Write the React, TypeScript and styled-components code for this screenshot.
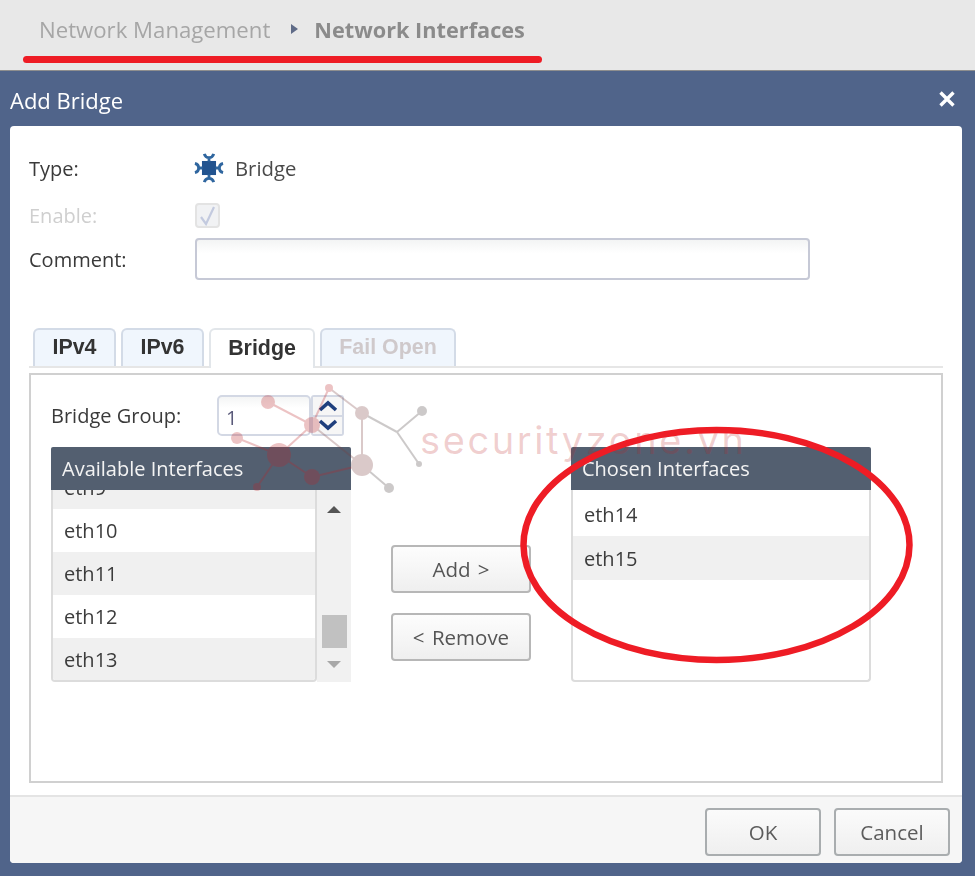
import styled, { createGlobalStyle } from "styled-components";

const GlobalStyle = createGlobalStyle`
  html, body {
    margin: 0;
    padding: 0;
    background: #fff;
  }

  * {
    box-sizing: border-box;
  }
`;

const available = [
  { name: "eth10", shaded: false },
  { name: "eth11", shaded: true },
  { name: "eth12", shaded: false },
  { name: "eth13", shaded: true },
];

const chosen = [
  { name: "eth14", shaded: false },
  { name: "eth15", shaded: true },
];

const ROSE = "rgb(188, 36, 40)";
const MAUVE = "rgb(120, 60, 60)";
const GREY = "rgb(70, 60, 60)";

const nodes = [
  { x: 268, y: 402, r: 7, fill: ROSE },
  { x: 312, y: 425, r: 8, fill: ROSE },
  { x: 237, y: 438, r: 6, fill: ROSE },
  { x: 279, y: 455, r: 12, fill: ROSE },
  { x: 257, y: 487, r: 4, fill: ROSE },
  { x: 312, y: 477, r: 8, fill: ROSE },
  { x: 362, y: 465, r: 11, fill: MAUVE },
  { x: 389, y: 488, r: 5, fill: GREY },
  { x: 329, y: 388, r: 4, fill: ROSE },
  { x: 362, y: 413, r: 7, fill: MAUVE },
  { x: 422, y: 411, r: 5, fill: GREY },
  { x: 419, y: 464, r: 3, fill: GREY },
];

const edges = [
  [268, 402, 312, 425, ROSE],
  [237, 438, 279, 455, ROSE],
  [279, 455, 312, 425, ROSE],
  [279, 455, 257, 487, ROSE],
  [279, 455, 312, 477, ROSE],
  [312, 477, 362, 465, ROSE],
  [362, 465, 389, 488, GREY],
  [362, 465, 362, 413, MAUVE],
  [329, 388, 362, 413, MAUVE],
  [329, 388, 312, 425, ROSE],
  [362, 413, 397, 432, GREY],
  [397, 432, 422, 411, GREY],
  [397, 432, 419, 464, GREY],
  [312, 425, 362, 465, MAUVE],
] as const;

function BridgeIcon(): JSX.Element {
  return (
    <svg width="30" height="30" viewBox="0 0 32 32">
      <rect x="8.5" y="8.5" width="15" height="15" fill="#22538f" />
      <g fill="none" stroke="#2f669f" strokeWidth="3">
        <path d="M16 9V5M11 1Q12 5 16 5T21 1" />
        <path d="M16 23V27M11 31Q12 27 16 27T21 31" />
        <path d="M9 16H5M1 11Q5 12 5 16T1 21" />
        <path d="M23 16H27M31 11Q27 12 27 16T31 21" />
      </g>
    </svg>
  );
}

export default function App(): JSX.Element {
  return (
    <Page>
      <GlobalStyle />
      <Screen>
        <Header>
          <Crumb>Network Management</Crumb>
          <CrumbArrow />
          <CrumbCurrent>Network Interfaces</CrumbCurrent>
        </Header>
        <Dialog>
          <TitleBar>
            <Title>Add Bridge</Title>
            <svg width="18" height="18" viewBox="0 0 18 18">
              <path d="M2.5 2.5 15.5 15.5M15.5 2.5 2.5 15.5" stroke="#fff" strokeWidth="3.4" />
            </svg>
          </TitleBar>
          <Body>
            <Form>
              <TypeRow>
                <Label>Type:</Label>
                <TypeValue>
                  <BridgeIcon />
                  <span>Bridge</span>
                </TypeValue>
              </TypeRow>
              <EnableRow>
                <Label $disabled>Enable:</Label>
                <CheckBox>
                  <svg width="17" height="20" viewBox="0 0 17 20">
                    <path d="M2 11 7 18 15 1" fill="none" stroke="#c3cadf" strokeWidth="2.2" />
                  </svg>
                </CheckBox>
              </EnableRow>
              <CommentRow>
                <Label>Comment:</Label>
                <TextInput />
              </CommentRow>
            </Form>
            <TabArea>
              <TabStrip>
                <Tab $width={83}>IPv4</Tab>
                <Tab $width={83}>IPv6</Tab>
                <Tab $width={106} $active>Bridge</Tab>
                <Tab $width={136} $disabled>Fail Open</Tab>
              </TabStrip>
              <Panel>
                <GroupRow>
                  <GroupLabel>Bridge Group:</GroupLabel>
                  <NumberBox>1</NumberBox>
                  <Spinner>
                    <SpinButton>
                      <svg width="22" height="12" viewBox="0 0 22 12">
                        <path d="M3 10 11 3 19 10" fill="none" stroke="#1f3f7d" strokeWidth="3.6" />
                      </svg>
                    </SpinButton>
                    <SpinButton>
                      <svg width="22" height="12" viewBox="0 0 22 12">
                        <path d="M3 2 11 9 19 2" fill="none" stroke="#1f3f7d" strokeWidth="3.6" />
                      </svg>
                    </SpinButton>
                  </Spinner>
                </GroupRow>
                <Transfer>
                  <ListColumn>
                    <ListHeader>Available Interfaces</ListHeader>
                    <ListBody>
                      <Rows>
                        <ClippedRow>
                          <span>eth9</span>
                        </ClippedRow>
                        {available.map((item) => (
                          <Row key={item.name} $shaded={item.shaded} $height={43}>{item.name}</Row>
                        ))}
                      </Rows>
                      <ScrollBar>
                        <ArrowUp />
                        <Thumb />
                        <ArrowDown />
                      </ScrollBar>
                    </ListBody>
                  </ListColumn>
                  <Actions>
                    <ActionButton>Add &gt;</ActionButton>
                    <ActionButton>&lt; Remove</ActionButton>
                  </Actions>
                  <ListColumn>
                    <ListHeader>Chosen Interfaces</ListHeader>
                    <ListBody>
                      <Rows $inset={2}>
                        {chosen.map((item) => (
                          <Row key={item.name} $shaded={item.shaded} $height={44}>{item.name}</Row>
                        ))}
                      </Rows>
                    </ListBody>
                  </ListColumn>
                </Transfer>
              </Panel>
            </TabArea>
            <Footer>
              <FooterButton>OK</FooterButton>
              <FooterButton>Cancel</FooterButton>
            </Footer>
          </Body>
        </Dialog>
      </Screen>

      <Watermark viewBox="0 0 975 876" width="975" height="876">
        <g opacity="0.27">
          {edges.map(([x1, y1, x2, y2, color]) => (
            <line key={`${x1}-${y1}-${x2}-${y2}`} x1={x1} y1={y1} x2={x2} y2={y2} stroke={color} strokeWidth="2" />
          ))}
          {nodes.map((n) => (
            <circle key={`${n.x}-${n.y}`} cx={n.x} cy={n.y} r={n.r} fill={n.fill} />
          ))}
        </g>
      </Watermark>
      <WatermarkText>securityzone.vn</WatermarkText>

      <RedLine />
      <RedCircle viewBox="0 0 975 876" width="975" height="876">
        <ellipse cx="716.5" cy="545" rx="193" ry="115" fill="none" stroke="#ee1c25" strokeWidth="6.5" />
      </RedCircle>
    </Page>
  );
}

const Page = styled.div`
  position: relative;
  width: 975px;
  height: 876px;
  overflow: hidden;
  font-family: "Open Sans", "Liberation Sans", sans-serif;
  color: #333;
`;

const Screen = styled.div`
  display: flex;
  flex-direction: column;
  height: 100%;
  filter: blur(0.5px);
`;

const Header = styled.div`
  display: flex;
  align-items: center;
  height: 71px;
  flex-shrink: 0;
  padding: 0 0 12px 39px;
  background: #e8e8e8;
  border-bottom: 1px solid #8e8e8e;
  font-size: 22.2px;
`;

const Crumb = styled.span`
  color: #a6a6a6;
`;

const CrumbArrow = styled.span`
  width: 0;
  height: 0;
  margin: 0 16px 0 21px;
  border-style: solid;
  border-width: 5.5px 0 5.5px 7px;
  border-color: transparent transparent transparent #5f6b87;
`;

const CrumbCurrent = styled.span`
  color: #8b8b8b;
  font-weight: 700;
  font-size: 21.7px;
`;

const Dialog = styled.div`
  flex: 1;
  display: flex;
  flex-direction: column;
  padding: 0 13px 13px 10px;
  background: #50648a;
`;

const TitleBar = styled.div`
  display: flex;
  align-items: center;
  justify-content: space-between;
  height: 55px;
  flex-shrink: 0;
  margin-right: 6px;
  color: #fff;
`;

const Title = styled.div`
  margin-top: 2px;
  font-size: 22px;
  font-weight: 500;
`;

const Body = styled.div`
  flex: 1;
  display: flex;
  flex-direction: column;
  overflow: hidden;
  background: #fff;
  border-radius: 4px;
`;

const Form = styled.div`
  display: flex;
  flex-direction: column;
  padding: 24px 152px 0 19px;
`;

const Label = styled.div<{ $disabled?: boolean }>`
  width: 166px;
  font-size: 20px;
  color: ${(p) => (p.$disabled ? "#cfcfcf" : "#3a3a3a")};
`;

const TypeRow = styled.div`
  display: flex;
  align-items: center;
  height: 36px;
`;

const TypeValue = styled.div`
  display: flex;
  align-items: center;
  gap: 11px;
  margin-left: -1px;
  font-size: 20.3px;
  color: #4a4a4a;
`;

const EnableRow = styled.div`
  display: flex;
  align-items: center;
  height: 25px;
  margin-top: 17px;
`;

const CheckBox = styled.div`
  display: flex;
  align-items: center;
  justify-content: center;
  width: 25px;
  height: 25px;
  background: #f1f2f4;
  border: 2px solid #e3e3e3;
  border-radius: 4px;
`;

const CommentRow = styled.div`
  display: flex;
  align-items: center;
  height: 42px;
  margin-top: 10px;
`;

const TextInput = styled.div`
  flex: 1;
  height: 42px;
  background: linear-gradient(#f3f4f4, #fff 35%);
  border: 2px solid #c6c9d6;
  border-radius: 4px;
`;

const TabArea = styled.div`
  display: flex;
  flex-direction: column;
  margin-top: 48px;
  padding: 0 19px;
`;

const TabStrip = styled.div`
  display: flex;
  gap: 5px;
  height: 40px;
  padding-left: 4px;
  border-bottom: 2px solid #e6e6e6;
`;

const Tab = styled.div<{ $width: number; $active?: boolean; $disabled?: boolean }>`
  display: flex;
  align-items: center;
  justify-content: center;
  width: ${(p) => p.$width}px;
  height: ${(p) => (p.$active ? 40 : 38)}px;
  padding-bottom: 2px;
  background: ${(p) => (p.$active ? "#fff" : "#f0f6fd")};
  border: 2px solid ${(p) => (p.$active ? "#e2e6ea" : "#d3dbe7")};
  border-bottom: none;
  border-radius: 6px 6px 0 0;
  font-family: "Liberation Sans", Arial, sans-serif;
  font-size: 21.4px;
  font-weight: 700;
  color: ${(p) => (p.$disabled ? "#cfc9cb" : "#333")};
`;

const Panel = styled.div`
  display: flex;
  flex-direction: column;
  height: 410px;
  margin-top: 5px;
  padding: 20px 20px 0;
  border: 2px solid #d0d0d0;
`;

const GroupRow = styled.div`
  display: flex;
  align-items: center;
  height: 41px;
`;

const GroupLabel = styled.div`
  width: 166px;
  font-size: 20px;
  color: #3a3a3a;
`;

const NumberBox = styled.div`
  display: flex;
  align-items: center;
  width: 94px;
  height: 41px;
  padding: 3px 0 0 7px;
  border: 2px solid #d3d8e4;
  border-radius: 5px;
  background: linear-gradient(#f4f5f5, #fff 30%);
  font-size: 20px;
  color: #5a5a7a;
`;

const Spinner = styled.div`
  display: flex;
  flex-direction: column;
  width: 33px;
  height: 41px;
  border: 2px solid #d3d8e4;
  border-radius: 3px;
`;

const SpinButton = styled.div`
  flex: 1;
  display: flex;
  align-items: center;
  justify-content: center;
  background: #f6f6f6;
  & + & {
    border-top: 2px solid #d3d8e4;
  }
`;

const Transfer = styled.div`
  display: flex;
  margin-top: 11px;
`;

const ListColumn = styled.div`
  display: flex;
  flex-direction: column;
  width: 300px;
  height: 235px;
`;

const ListHeader = styled.div`
  display: flex;
  align-items: center;
  flex-shrink: 0;
  height: 43px;
  padding-left: 11px;
  background: #535f70;
  border-radius: 2px 2px 0 0;
  box-shadow: 0 1px 0 #c4c8ce;
  font-size: 20px;
  color: #f3f3f3;
`;

const ListBody = styled.div`
  flex: 1;
  display: flex;
  min-height: 0;
`;

const Rows = styled.div<{ $inset?: number }>`
  flex: 1;
  overflow: hidden;
  padding-top: ${(p) => p.$inset ?? 0}px;
  border: 2px solid #dcdcdc;
  border-top: none;
  border-radius: 0 0 4px 4px;
  background: #fff;
`;

const Row = styled.div<{ $shaded?: boolean; $height: number }>`
  display: flex;
  align-items: center;
  height: ${(p) => p.$height}px;
  padding-left: 11px;
  background: ${(p) => (p.$shaded ? "#f0f0f0" : "#fff")};
  font-size: 20px;
  color: #3c3c3c;
`;

const ClippedRow = styled.div`
  display: flex;
  align-items: flex-end;
  height: 19px;
  padding: 0 0 12px 11px;
  overflow: hidden;
  background: #f0f0f0;
  font-size: 20px;
  line-height: 19px;
  color: #3c3c3c;
`;

const ScrollBar = styled.div`
  display: flex;
  flex-direction: column;
  align-items: center;
  width: 34px;
  padding: 16px 0 14px;
  background: #f1f1f1;
`;

const ArrowUp = styled.div`
  width: 0;
  height: 0;
  border-style: solid;
  border-width: 0 7.5px 7px;
  border-color: transparent transparent #555;
`;

const Thumb = styled.div`
  width: 25px;
  height: 33px;
  margin-top: auto;
  background: #c1c1c1;
`;

const ArrowDown = styled.div`
  width: 0;
  height: 0;
  margin-top: 13px;
  border-style: solid;
  border-width: 7px 7.5px 0;
  border-color: #a8a8a8 transparent transparent;
`;

const Actions = styled.div`
  display: flex;
  flex-direction: column;
  gap: 20px;
  width: 140px;
  margin: 98px 40px 0;
`;

const ActionButton = styled.div`
  display: flex;
  align-items: center;
  justify-content: center;
  height: 48px;
  background: linear-gradient(#fdfdfd, #efefef);
  border: 2px solid #b7b7b7;
  border-radius: 4px;
  font-size: 20.5px;
  word-spacing: 2px;
  color: #555;
`;

const Footer = styled.div`
  flex: 1;
  display: flex;
  justify-content: flex-end;
  gap: 13px;
  margin-top: 12px;
  padding: 11px 12px 0 0;
  background: #f6f6f6;
  border-top: 2px solid #e4e4e4;
`;

const FooterButton = styled.div`
  display: flex;
  align-items: center;
  justify-content: center;
  width: 116px;
  height: 48px;
  background: linear-gradient(#fbfbfb, #efefef);
  border: 2px solid #a9adaf;
  border-radius: 4px;
  font-size: 20.5px;
  color: #5c5c5c;
`;

const Watermark = styled.svg`
  position: absolute;
  left: 0;
  top: 0;
  pointer-events: none;
`;

const WatermarkText = styled.div`
  position: absolute;
  left: 420px;
  top: 417px;
  font-family: Inter, "DejaVu Sans", sans-serif;
  font-weight: 400;
  font-size: 38px;
  line-height: 46px;
  letter-spacing: 2.6px;
  color: rgba(188, 36, 40, 0.22);
`;

const RedLine = styled.div`
  position: absolute;
  left: 23px;
  top: 56px;
  width: 519px;
  height: 7px;
  background: #ee1c25;
  border-radius: 4px;
`;

const RedCircle = styled.svg`
  position: absolute;
  left: 0;
  top: 0;
  pointer-events: none;
`;
